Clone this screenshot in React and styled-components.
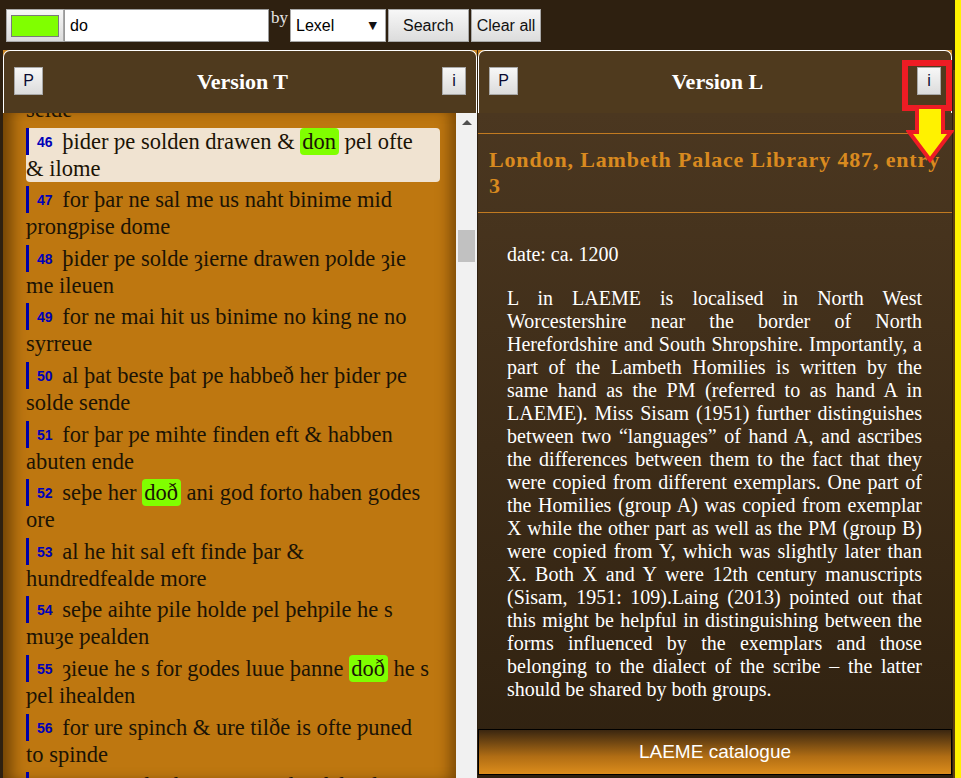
import React from 'react';
import styled, { createGlobalStyle } from 'styled-components';

const GlobalStyle = createGlobalStyle`
  html, body {
    margin: 0;
    padding: 0;
    height: 100%;
    overflow: hidden;
    background: #2e2010;
  }
  #root {
    height: 100%;
  }
`;

const Page = styled.div`
  display: grid;
  grid-template-columns: 1fr 6px;
  height: 100vh;
  position: relative;
  font-family: "Liberation Serif", "DejaVu Serif", serif;
`;

const Main = styled.div`
  display: flex;
  flex-direction: column;
  min-width: 0;
  min-height: 0;
`;

const YellowStrip = styled.div`
  background: #fff200;
`;

const TopBar = styled.div`
  height: 48px;
  flex-shrink: 0;
  display: flex;
  align-items: flex-start;
  padding: 9px 0 0 6px;
  box-sizing: border-box;
  background: #2e2010;
`;

const GreyButton = styled.button`
  height: 33px;
  margin: 0 0 0 ${(p) => p.$gap || 0}px;
  padding: 0 ${(p) => p.$pad || 10}px;
  border: 1px solid #a8a8a8;
  border-radius: 0;
  background: linear-gradient(#f7f7f7, #dcdcdc);
  font: 16px "Liberation Sans", Arial, sans-serif;
  color: #111;
  display: flex;
  align-items: center;
  justify-content: center;
`;

const Swatch = styled.span`
  display: block;
  width: 46px;
  height: 20px;
  background: #80ff00;
  border: 1px solid #7a7a7a;
`;

const TextInput = styled.input`
  width: 205px;
  height: 33px;
  box-sizing: border-box;
  margin: 0;
  padding: 0 5px;
  border: 1px solid #9a9a9a;
  font: 16px "Liberation Sans", Arial, sans-serif;
  color: #000;
  outline: none;
`;

const ByLabel = styled.span`
  font: 17px "Liberation Serif", serif;
  color: #e6e6e6;
  line-height: 18px;
  margin: 0 2px 0 2px;
`;

const SelectWrap = styled.div`
  position: relative;
  width: 96px;
  height: 33px;
`;

const Select = styled.select`
  appearance: none;
  width: 100%;
  height: 100%;
  margin: 0;
  padding: 0 0 0 5px;
  border: 1px solid #a8a8a8;
  border-radius: 0;
  background: #fff;
  font: 16px "Liberation Sans", Arial, sans-serif;
  color: #000;
`;

const SelectArrow = styled.span`
  position: absolute;
  right: 9px;
  top: 10px;
  font: 11px "DejaVu Sans", sans-serif;
  color: #111;
  pointer-events: none;
`;

const Panels = styled.div`
  flex: 1;
  min-height: 0;
  display: flex;
  gap: 1px;
  padding: 2px 0 0 3px;
`;

const Panel = styled.section`
  width: 474px;
  flex-shrink: 0;
  display: flex;
  flex-direction: column;
  min-height: 0;
  background: #c98421;
`;

const PanelEdge = styled.div`
  width: 3px;
  margin-top: 20px;
  background: #5e3f10;
`;

const Header = styled.header`
  height: 63px;
  flex-shrink: 0;
  box-sizing: border-box;
  display: flex;
  align-items: center;
  justify-content: space-between;
  padding: 0 10px;
  background: #4f3a1e;
  border: 1px solid #fff;
  border-bottom: none;
  border-radius: 7px 7px 0 0;
`;

const HeaderTitle = styled.h2`
  margin: 0;
  font: bold 22px "Liberation Serif", serif;
  color: #fff;
`;

const SmallButton = styled(GreyButton)`
  width: ${(p) => p.$w || 29}px;
  height: 28px;
  padding: 0;
  margin-top: -2px;
  color: #0a0a30;
`;

const LeftBody = styled.div`
  flex: 1;
  min-height: 0;
  display: flex;
`;

const ScrollArea = styled.div`
  flex: 1;
  overflow: hidden;
  background: #be7710;
  box-shadow: inset 16px 0 16px -8px rgba(80, 45, 0, 0.75),
    inset -14px 0 14px -8px rgba(80, 45, 0, 0.6);
  padding: 0 16px 0 23px;
`;

const Lines = styled.div`
  margin-top: -44px;
`;

const Row = styled.div`
  font-size: 22.5px;
  line-height: 27px;
  color: #1b1305;
  margin-bottom: 4.6px;
  padding-right: 7px;
  border-radius: 4px;
  background: ${(p) => (p.$active ? '#f0e3d1' : 'transparent')};
`;

const Num = styled.span`
  display: inline-block;
  vertical-align: top;
  border-left: 3px solid #0000a8;
  padding: 1px 4px 0 8px;
  font: bold 14px "Liberation Sans", Arial, sans-serif;
  line-height: 26px;
  color: #0000b8;
`;

const Hit = styled.span`
  display: inline-block;
  background: #80ff00;
  border-radius: 4px;
  padding: 0 3px 0 2px;
  line-height: 27px;
`;

const Scrollbar = styled.div`
  width: 21px;
  flex-shrink: 0;
  background: #f1f1f1;
  display: flex;
  flex-direction: column;
  align-items: center;
`;

const ScrollUp = styled.span`
  margin-top: 7px;
  width: 0;
  height: 0;
  border-left: 5px solid transparent;
  border-right: 5px solid transparent;
  border-bottom: 5px solid #505050;
`;

const Thumb = styled.div`
  width: 17px;
  height: 32px;
  margin-top: 105px;
  background: #c1c1c1;
`;

const RightBody = styled.div`
  flex: 1;
  min-height: 0;
  display: flex;
  flex-direction: column;
  background: linear-gradient(#4b3720, #2f2110);
`;

const SourceTitle = styled.h3`
  margin: 20px 0 0;
  padding: 13px 6px 13px 11px;
  border-top: 1px solid #c27a20;
  border-bottom: 1px solid #c27a20;
  font: bold 22px "Liberation Serif", serif;
  line-height: 26px;
  letter-spacing: 0.85px;
  color: #d98a1f;
`;

const Info = styled.div`
  padding: 30px 30px 0 29px;
  font-size: 20px;
  line-height: 23px;
  color: #fff;
  text-align: justify;
`;

const InfoPara = styled.p`
  margin: 0 0 21px;
`;

const CatalogueButton = styled.div`
  margin-top: auto;
  margin-bottom: 3px;
  height: 46px;
  box-sizing: border-box;
  border: 1px solid #000;
  background: linear-gradient(#3a2610, #b06d14 60%, #dc8d1c);
  display: flex;
  align-items: center;
  justify-content: center;
  font: 19px "Liberation Sans", Arial, sans-serif;
  color: #fff;
`;

const Callout = styled.div`
  position: absolute;
  left: 902px;
  top: 60px;
  width: 50px;
  height: 51px;
  box-sizing: border-box;
  border: 6px solid #ed1c24;
`;

const CalloutArrow = styled.svg`
  position: absolute;
  left: 906px;
  top: 105px;
`;

const rows = [
  { n: 45, parts: ['þat ƿe her on liue habbeð idon ofte & selde'] },
  { n: 46, active: true, parts: ['þider ƿe solden drawen & ', { hit: 'don' }, ' ƿel ofte & ilome'] },
  { n: 47, parts: ['for þar ne sal me us naht binime mid ƿrongƿise dome'] },
  { n: 48, parts: ['þider ƿe solde ȝierne drawen ƿolde ȝie me ileuen'] },
  { n: 49, parts: ['for ne mai hit us binime no king ne no syrreue'] },
  { n: 50, parts: ['al þat beste þat ƿe habbeð her þider ƿe solde sende'] },
  { n: 51, parts: ['for þar ƿe mihte finden eft & habben abuten ende'] },
  { n: 52, parts: ['seþe her ', { hit: 'doð' }, ' ani god forto haben godes ore'] },
  { n: 53, parts: ['al he hit sal eft finde þar & hundredfealde more'] },
  { n: 54, parts: ['seþe aihte ƿile holde ƿel þehƿile he s muȝe ƿealden'] },
  { n: 55, parts: ['ȝieue he s for godes luue þanne ', { hit: 'doð' }, ' he s ƿel ihealden'] },
  { n: 56, parts: ['for ure spinch & ure tilðe is ofte ƿuned to spinde'] },
  { n: 57, parts: ['ac on godes berne ure sed is ful ƿel ihealden'] },
];

function Verse({ n, active, parts }) {
  return (
    <Row $active={active}>
      <Num>{n}</Num>{' '}
      {parts.map((p, i) => (typeof p === 'string' ? <React.Fragment key={i}>{p}</React.Fragment> : <Hit key={i}>{p.hit}</Hit>))}
    </Row>
  );
}

export default function App() {
  return (
    <>
      <GlobalStyle />
      <Page>
        <Main>
          <TopBar>
            <GreyButton $pad={4}>
              <Swatch />
            </GreyButton>
            <TextInput defaultValue="do" />
            <ByLabel>by</ByLabel>
            <SelectWrap>
              <Select defaultValue="Lexel">
                <option>Lexel</option>
                <option>Form</option>
              </Select>
              <SelectArrow>▼</SelectArrow>
            </SelectWrap>
            <GreyButton $pad={14} $gap={2}>Search</GreyButton>
            <GreyButton $pad={5} $gap={2}>Clear all</GreyButton>
          </TopBar>

          <Panels>
            <Panel>
              <Header>
                <SmallButton>P</SmallButton>
                <HeaderTitle>Version T</HeaderTitle>
                <SmallButton $w={24}>i</SmallButton>
              </Header>
              <LeftBody>
                <ScrollArea>
                  <Lines>
                    {rows.map((r) => (
                      <Verse key={r.n} {...r} />
                    ))}
                  </Lines>
                </ScrollArea>
                <Scrollbar>
                  <ScrollUp />
                  <Thumb />
                </Scrollbar>
              </LeftBody>
            </Panel>

            <Panel>
              <Header>
                <SmallButton>P</SmallButton>
                <HeaderTitle>Version L</HeaderTitle>
                <SmallButton $w={24}>i</SmallButton>
              </Header>
              <RightBody>
                <SourceTitle>London, Lambeth Palace Library 487, entry 3</SourceTitle>
                <Info>
                  <InfoPara>date: ca. 1200</InfoPara>
                  <InfoPara>
                    L in LAEME is localised in North West Worcestershire near the border of North
                    Herefordshire and South Shropshire. Importantly, a part of the Lambeth Homilies is
                    written by the same hand as the PM (referred to as hand A in LAEME). Miss Sisam (1951)
                    further distinguishes between two “languages” of hand A, and ascribes the differences
                    between them to the fact that they were copied from different exemplars. One part of
                    the Homilies (group A) was copied from exemplar X while the other part as well as the
                    PM (group B) were copied from Y, which was slightly later than X. Both X and Y were
                    12th century manuscripts (Sisam, 1951: 109).Laing (2013) pointed out that this might
                    be helpful in distinguishing between the forms influenced by the exemplars and those
                    belonging to the dialect of the scribe – the latter should be shared by both groups.
                  </InfoPara>
                </Info>
                <CatalogueButton>LAEME catalogue</CatalogueButton>
              </RightBody>
            </Panel>
            <PanelEdge />
          </Panels>
        </Main>
        <YellowStrip />

        <Callout />
        <CalloutArrow width="48" height="60" viewBox="0 0 48 60">
          <path
            d="M11 2 L37 2 L37 27 L45 27 L24 55 L3 27 L11 27 Z"
            fill="#fff200"
            stroke="#ed1c24"
            strokeWidth="4"
            strokeLinejoin="miter"
          />
        </CalloutArrow>
      </Page>
    </>
  );
}
